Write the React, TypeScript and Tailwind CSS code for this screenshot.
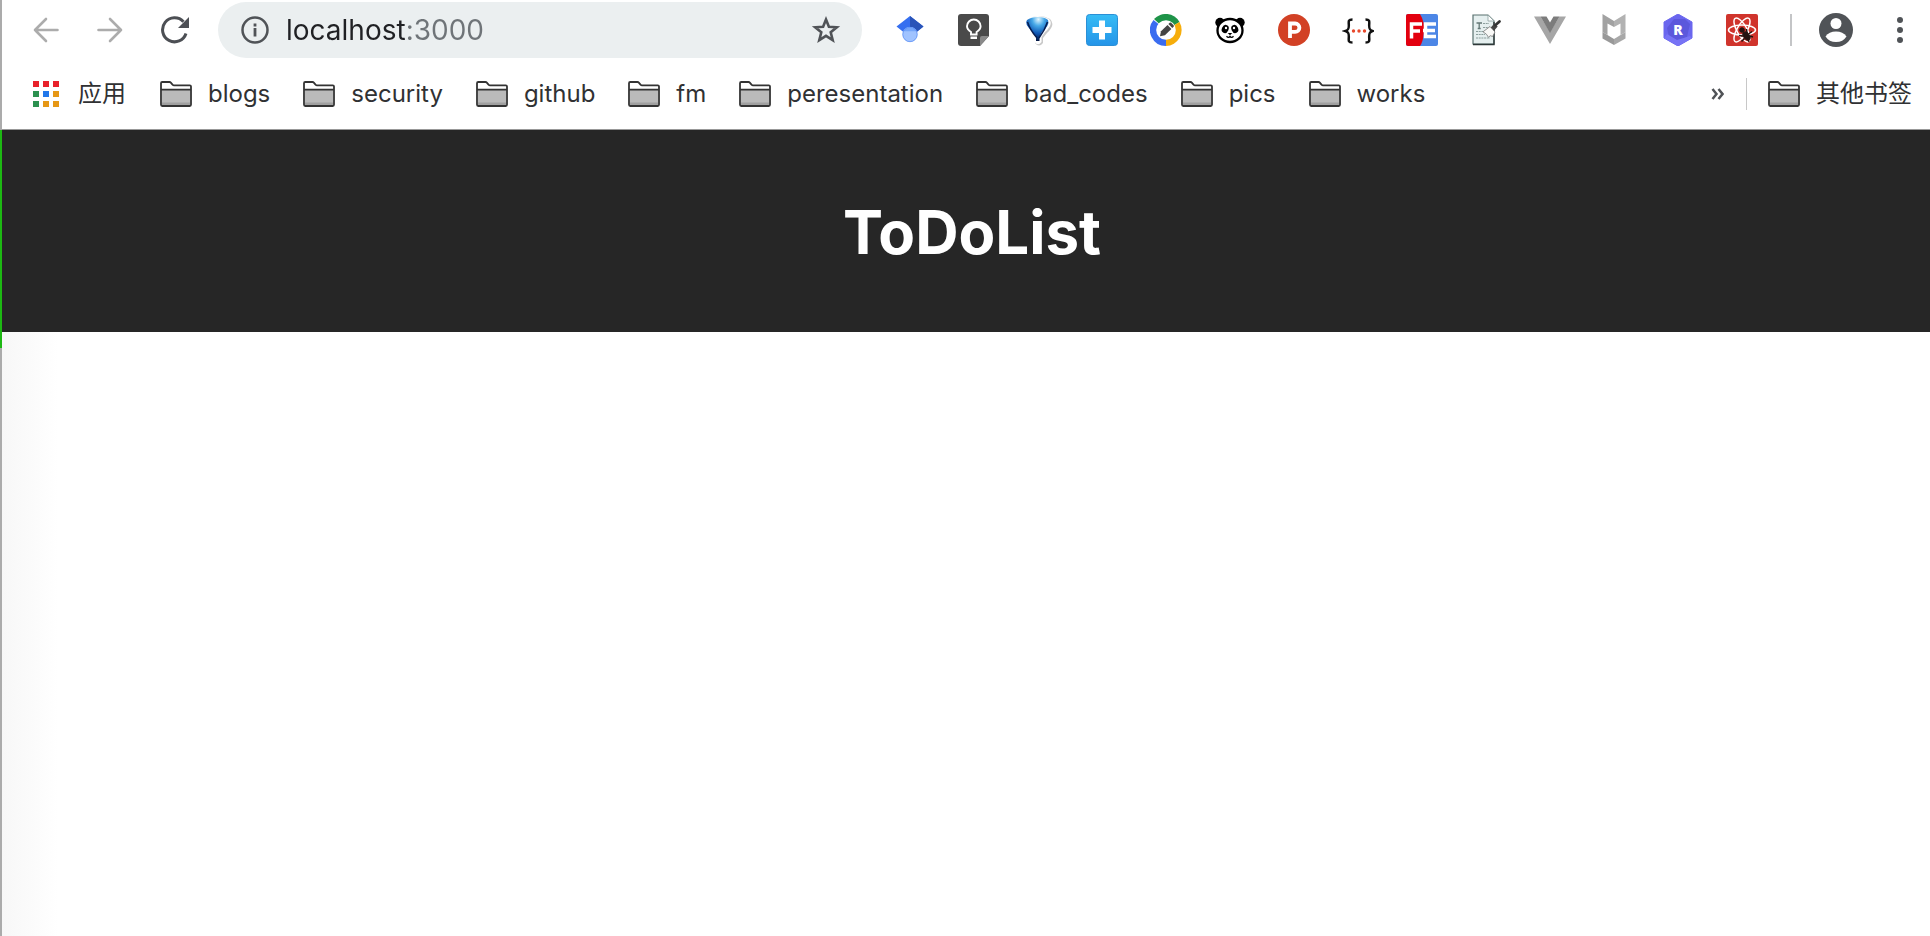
import type { ReactNode } from "react";

function Folder() {
  return (
    <svg width="32" height="26" viewBox="0 0 32 26" fill="none" aria-hidden="true" className="shrink-0">
      <path d="M1 24V2H10.500L15 4.500H31V24Z" fill="#fff" />
      <path d="M2 9H30V24H2Z" fill="#bababa" />
      <path d="M2 21.500H30V24H2Z" fill="#a0a0a0" />
      <path d="M1 23.500V2.200Q1 1 2.200 1H9.500Q10.300 1 10.800 1.600L12.500 3.600Q13.200 4.300 14 4.300H29.800Q31 4.300 31 5.500V23.500Q31 25 29.800 25H2.200Q1 25 1 23.500ZM1 8.600H31" stroke="#333" strokeWidth="1.800" />
    </svg>
  );
}

function AppsGrid() {
  const colors = ["#e8222b", "#e8222b", "#e8222b", "#2c9150", "#2277ea", "#e69716", "#2c9150", "#e69716", "#e69716"];
  return (
    <svg width="26" height="26" viewBox="0 0 26 26" aria-hidden="true" className="shrink-0">
      {colors.map((c, i) => (
        <rect key={i} x={(i % 3) * 10} y={Math.floor(i / 3) * 10} width="6" height="6" fill={c} />
      ))}
    </svg>
  );
}

const extensions: { name: string; icon: ReactNode }[] = [
  {
    name: "Scholar",
    icon: (
      <>
        <path d="M16 2 2.500 12.500 10 18.500H22L29.500 12.500Z" fill="#356ff0" />
        <path d="M16 2 29.500 12.500 22 18.500 16 14Z" fill="#2a54b8" />
        <circle cx="16" cy="20.500" r="7.500" fill="#a0c3ff" />
        <path d="M9.200 17.300a7.500 7.500 0 0 1 13.600 0Z" fill="#76a7fa" />
        <circle cx="16" cy="20.500" r="7.200" fill="none" stroke="#5f92f5" strokeWidth=".8" />
      </>
    ),
  },
  {
    name: "Keep",
    icon: (
      <>
        <path d="M3 0H28Q31 0 31 3V22L22 32H3Q0 32 0 29V3Q0 0 3 0Z" fill="#4a4a4a" />
        <path d="M31 22 22 32V24Q22 22 24 22Z" fill="#8a8a8a" />
        <path d="M13 20.500v-2.500C10.500 16.500 9 14.500 9 12.300a6.800 6.800 0 0 1 13.600 0c0 2.300-1.500 4.200-4 5.700v2.500Z" fill="none" stroke="#fff" strokeWidth="1.900" />
        <path d="M12.500 22.500h6.500v2.500h-6.500z" fill="#fff" />
      </>
    ),
  },
  {
    name: "Balloon",
    icon: (
      <>
        <defs>
          <radialGradient id="balloon" cx=".55" cy=".1" r=".9">
            <stop offset="0" stopColor="#e2f6ff" />
            <stop offset=".3" stopColor="#47a9e8" />
            <stop offset=".65" stopColor="#0d55b4" />
            <stop offset="1" stopColor="#041640" />
          </radialGradient>
        </defs>
        <path d="M6 5Q17-1 28 5Q34 11 25 19L21 24V29Q17 34 13 29V23L8 17Q0 10 6 5Z" fill="#c9c9c9" />
        <path d="M4 5Q16-1 27 5Q32 10 23 18L19.500 23V28Q16 32.500 12.500 28V23L7 17Q-1 10 4 5Z" fill="#fff" />
        <path d="M5 6Q9 3 16 3Q23 3 26 6Q28 11 20 18L17.500 23V27H14V23L10 17Q2 10 5 6Z" fill="url(#balloon)" />
        <path d="M5.500 8Q8 16 15 24M25.500 8Q23 16 17 24" stroke="#061d50" strokeWidth="1.500" fill="none" />
      </>
    ),
  },
  {
    name: "Add",
    icon: (
      <>
        <defs>
          <linearGradient id="plus" x2="0" y2="1">
            <stop stopColor="#37bcf5" />
            <stop offset="1" stopColor="#2494e8" />
          </linearGradient>
        </defs>
        <rect x=".5" y=".5" width="31" height="31" rx="3" fill="url(#plus)" stroke="#2b8fd6" />
        <path d="M13 6.500h6V13h6.500v6H19v6.500h-6V19H6.500v-6H13Z" fill="#fff" />
      </>
    ),
  },
  {
    name: "Editor",
    icon: (
      <>
        <path d="M16 16 4 5A16 16 0 0 1 29.500 8Z" fill="#1e9348" />
        <path d="M16 16 29.500 8A16 16 0 0 1 16 32Z" fill="#f6ad0b" />
        <path d="M16 16V32A16 16 0 0 1 3.500 6Z" fill="#3a6cf0" />
        <circle cx="16" cy="16" r="9.800" fill="#fff" />
        <path d="m10 22.300 1-5 6.500-6.300 3.900 3.900-6.500 6.300Z" fill="#444" />
        <path d="m18.400 10.100 1.300-1.300q.7-.6 1.400 0l2.500 2.500q.6.700 0 1.400l-1.300 1.300Z" fill="#444" />
      </>
    ),
  },
  {
    name: "Panda",
    icon: (
      <>
        <circle cx="6" cy="8.500" r="4.700" />
        <circle cx="26" cy="8.500" r="4.700" />
        <ellipse cx="16" cy="16.500" rx="12.500" ry="11.500" fill="#fff" stroke="#000" strokeWidth="2.300" />
        <ellipse cx="11.200" cy="15" rx="3.300" ry="4.200" transform="rotate(25 11.200 15)" />
        <ellipse cx="20.800" cy="15" rx="3.300" ry="4.200" transform="rotate(-25 20.800 15)" />
        <circle cx="12" cy="14" r="1.200" fill="#fff" />
        <circle cx="20" cy="14" r="1.200" fill="#fff" />
        <path d="M13.700 19h4.600L16 21.200Z" />
        <path d="M12.500 22.300Q14.500 24.500 16 22.300Q17.500 24.500 19.500 22.300" stroke="#000" strokeWidth="1.300" fill="none" />
      </>
    ),
  },
  {
    name: "Posts",
    icon: (
      <>
        <circle cx="16" cy="16" r="16" fill="#d24125" />
        <path d="M12 24V9.500h5.200a4.200 4.200 0 0 1 0 8.400H12" stroke="#fff" strokeWidth="3.800" fill="none" />
      </>
    ),
  },
  {
    name: "JSON",
    icon: (
      <>
        <path d="M10.500 5.500C6.500 5.500 6.500 7 6.800 10.500 7 14 6.800 16 3.500 17 6.800 18 7 20 6.800 23.500 6.500 27 6.500 28.500 10.500 28.500" stroke="#111" strokeWidth="2.500" fill="none" />
        <path d="M23.500 5.500c4 0 4 1.500 3.700 5-.2 3.500 0 5.500 3.300 6.500-3.300 1-3.500 3-3.300 6.500.3 3.500.3 5-3.700 5" stroke="#111" strokeWidth="2.500" fill="none" />
        <circle cx="11.500" cy="17" r="1.700" fill="#e8482b" />
        <circle cx="17" cy="17" r="1.700" fill="#e8482b" />
        <circle cx="22.500" cy="17" r="1.700" fill="#e8482b" />
      </>
    ),
  },
  {
    name: "FE helper",
    icon: (
      <>
        <rect width="32" height="32" rx="2" fill="#4c86e6" />
        <path d="M2 0H14Q19 8 18 18T14 32H2Q0 32 0 30V2Q0 0 2 0Z" fill="#e3000f" />
        <path d="M5.500 24.500V10H16M5.500 17H14M30 10H19.500V22.500H30M17 16.500H29" stroke="#fff" strokeWidth="3.500" fill="none" />
      </>
    ),
  },
  {
    name: "Page cleaner",
    icon: (
      <>
        <path d="M3 1H18L24 7V30H3Z" fill="#e5efef" stroke="#59716f" strokeWidth="1.200" />
        <path d="M24 8V30.500H3" stroke="#2e3838" strokeWidth="1.400" fill="none" />
        <path d="M18 1V7H24Z" fill="#fff" stroke="#8ba09e" strokeWidth=".8" />
        <path d="M6.500 9H12M9.200 9V14.500M7.700 14.500h3" stroke="#637775" strokeWidth="1.300" />
        <path d="M13 9.500h6M13 13.500h5M6 17.500h9M6 20.500h9M6 24h14" stroke="#8b9e9c" strokeWidth="1" strokeDasharray="2 .7" />
        <path d="m20 12.500 5 5.500-2.500 4.500-2.200-.8-1.800 1.600-2-3-3.500-2.500Z" fill="#f9f9f7" stroke="#777" strokeWidth=".8" />
        <path d="m22.500 15 3.500-4" stroke="#444" strokeWidth="4.500" />
        <path d="m25.500 11 4-3.500" stroke="#333" strokeWidth="2.800" strokeLinecap="round" />
      </>
    ),
  },
  {
    name: "Vue",
    icon: (
      <>
        <path d="M0 2.500H6.500L16 18 25.500 2.500H32L16 30Z" fill="#a6a6a6" />
        <path d="M6.500 2.500H12.500L16 8.500 19.500 2.500H25.500L16 19Z" fill="#7c7c7c" />
      </>
    ),
  },
  {
    name: "WebAdvisor",
    icon: (
      <>
        <path d="M4.500 0 16 7V13L9.500 9.500V21L4.500 18Z" fill="#a2a2a2" />
        <path d="M27.500 0 16 7V13L22.500 9.500V21L27.500 18Z" fill="#b2b2b2" />
        <path d="M4.500 18 16 25V31L4.500 24.500Z" fill="#999" />
        <path d="M27.500 18 16 25V31L27.500 24.500Z" fill="#a8a8a8" />
      </>
    ),
  },
  {
    name: "Rewriter",
    icon: (
      <>
        <path d="M16 0 30 8V24L16 32 2 24V8Z" fill="#6a66ee" stroke="#6a66ee" strokeLinejoin="round" />
        <path d="M5 14 12 5H23L28 10 25 23 17 27 7 23Z" fill="#5c58dc" />
        <path d="M16 32 2 24 5 20 15 26 28 22 30 24Z" fill="#7773f5" />
        <text x="16" y="21" textAnchor="middle" fontFamily="Open Sans, sans-serif" fontWeight="800" fontSize="14" fill="#fff">R</text>
      </>
    ),
  },
  {
    name: "React tools",
    icon: (
      <>
        <rect width="32" height="32" rx="2" fill="#d0342c" />
        <g stroke="#fff" strokeWidth="1.500" fill="none">
          <ellipse cx="16" cy="16" rx="13.500" ry="5" />
          <ellipse cx="16" cy="16" rx="13.500" ry="5" transform="rotate(60 16 16)" />
          <ellipse cx="16" cy="16" rx="13.500" ry="5" transform="rotate(120 16 16)" />
        </g>
        <g fill="#24120f" stroke="#24120f">
          <circle cx="16" cy="16" r="2.300" />
          <ellipse cx="20.500" cy="22" rx="2.800" ry="4.500" transform="rotate(-38 20.500 22)" />
          <path d="m13 21.500 4 .5m-1.500 5.500 3-3m4.500 3.500-1-4M20.500 15l.5 4m5-1.500-3.500 2.500m4.500 3-3-1" strokeWidth="1.500" />
        </g>
      </>
    ),
  },
];

const folders = ["blogs", "security", "github", "fm", "peresentation", "bad_codes", "pics", "works"];

function Arrow({ flip = false }: { flip?: boolean }) {
  return (
    <svg width="26" height="26" viewBox="0 0 26 26" fill="none" stroke="#acacac" strokeWidth="2.600" strokeLinecap="round" strokeLinejoin="round" aria-hidden="true" className={flip ? "-scale-x-100" : ""}>
      <path d="M24.500 13H2M13 2 2 13 13 24" />
    </svg>
  );
}

function Toolbar() {
  return (
    <div className="flex h-15 items-center pl-[31px] pr-[18px]">
      <div className="flex items-center gap-[38px]">
        <button type="button" aria-label="Back"><Arrow /></button>
        <button type="button" aria-label="Forward"><Arrow flip /></button>
        <button type="button" aria-label="Reload">
          <svg width="28" height="28" viewBox="0 0 28 28" fill="none" aria-hidden="true">
            <path d="M25 17.500A12 12 0 1 1 22.500 5.800" stroke="#4c4f54" strokeWidth="3" />
            <path d="M28 1V12H17Z" fill="#4c4f54" />
          </svg>
        </button>
      </div>
      <div className="ml-[29px] flex h-14 min-w-0 flex-1 items-center rounded-full bg-[#ebeff0] pl-[23px] pr-[21px]">
        <svg width="28" height="28" viewBox="0 0 28 28" fill="none" aria-hidden="true" className="shrink-0">
          <circle cx="14" cy="14" r="12.500" stroke="#505357" strokeWidth="2.500" />
          <path d="M14 12v8.500M14 7.500v3" stroke="#505357" strokeWidth="2.800" />
        </svg>
        <input
          aria-label="Address"
          defaultValue="localhost:3000"
          className="ml-[17px] min-w-0 flex-1 bg-[linear-gradient(to_right,#202124_119px,#6f7478_119px)] bg-clip-text text-[28px] leading-9 text-transparent caret-black outline-none"
        />
        <button type="button" aria-label="Bookmark this page">
          <svg width="30" height="30" viewBox="0 0 30 30" fill="none" stroke="#505357" strokeWidth="2.600" aria-hidden="true">
            <path d="m15 4.500 2.900 7.300 7.900.5-6.100 5 2 7.800L15 20.800l-6.700 4.300 2-7.800-6.100-5 7.900-.5Z" />
          </svg>
        </button>
      </div>
      <div className="ml-8 flex items-center gap-8">
        {extensions.map((e) => (
          <button type="button" key={e.name} aria-label={e.name} className="size-8">
            <svg width="32" height="32" viewBox="0 0 32 32" aria-hidden="true">{e.icon}</svg>
          </button>
        ))}
      </div>
      <div className="ml-8 h-8 w-0.5 bg-[#c4c5c7]" />
      <button type="button" aria-label="Profile" className="ml-[27px]">
        <svg width="34" height="34" viewBox="0 0 34 34" aria-hidden="true">
          <circle cx="17" cy="17" r="17" fill="#505357" />
          <circle cx="17" cy="10.500" r="5.500" fill="#fff" />
          <path d="M6.500 23.500Q10 18.500 17 18.500T27.500 23.500Q24 29 17 29T6.500 23.500Z" fill="#fff" />
        </svg>
      </button>
      <button type="button" aria-label="Menu" className="ml-[35px]">
        <svg width="24" height="28" viewBox="0 0 24 28" fill="#505357" aria-hidden="true">
          <circle cx="12" cy="4" r="3" /><circle cx="12" cy="14" r="3" /><circle cx="12" cy="24" r="3" />
        </svg>
      </button>
    </div>
  );
}

function Bookmarks() {
  return (
    <nav aria-label="Bookmarks" className="flex h-[70px] items-center border-b border-[#989898] pb-0.5 pl-[31px] pr-[18px] text-2xl text-[#303133]">
      <button type="button" className="flex items-center gap-[19px]">
        <AppsGrid />应用
      </button>
      <div className="ml-[34px] flex items-center gap-[33px]">
        {folders.map((name) => (
          <button type="button" key={name} className="flex items-center gap-4">
            <Folder />{name}
          </button>
        ))}
      </div>
      <button type="button" aria-label="More bookmarks" className="ml-auto">
        <svg width="13" height="12" viewBox="0 0 13 12" fill="none" stroke="#505357" strokeWidth="2.500" aria-hidden="true">
          <path d="m1.500 1 4 5-4 5M7.500 1l4 5-4 5" />
        </svg>
      </button>
      <div className="ml-[22px] h-8 w-px bg-[#c8c8c8]" />
      <button type="button" className="ml-[21px] flex items-center gap-4">
        <Folder />其他书签
      </button>
    </nav>
  );
}

export default function App() {
  return (
    <div className="flex min-h-screen bg-white font-['Inter','Noto_Sans_CJK_SC',sans-serif]">
      <div className="flex w-0.5 shrink-0 flex-col bg-[#ababab] pt-[130px]">
        <div className="h-[218px] bg-[#1db813]" />
      </div>
      <div className="flex min-w-0 flex-1 flex-col">
        <Toolbar />
        <Bookmarks />
        <header className="bg-[#262626] pb-16 pl-3 pt-[66px] text-center">
          <h1 className="text-6xl font-bold leading-[72px] text-white">ToDoList</h1>
        </header>
        <main className="flex-1 bg-[linear-gradient(to_right,#f7f7f7,#ffffff_56px)]" />
      </div>
    </div>
  );
}
